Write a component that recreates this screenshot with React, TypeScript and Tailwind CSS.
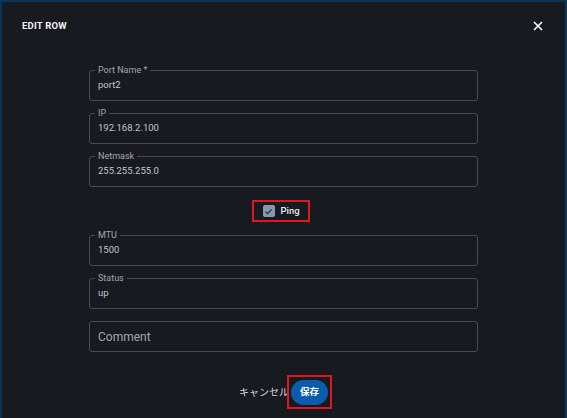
import React from 'react';

const fields = [
  { label: 'Port Name *', value: 'port2' },
  { label: 'IP', value: '192.168.2.100' },
  { label: 'Netmask', value: '255.255.255.0' },
];

const fields2 = [
  { label: 'MTU', value: '1500' },
  { label: 'Status', value: 'up' },
];

function Field({ label, value }: { label: string; value: string }) {
  return (
    <div className="relative h-[31px] w-full rounded-[3px] border border-[#464a52] flex items-center px-[8px]">
      <span className="absolute left-[5px] -top-[6px] bg-[#171a21] px-[3px] text-[9px] leading-[10px] text-[#a3a6ad]">
        {label}
      </span>
      <span className="text-[9.5px] text-[#c4c6cb]">{value}</span>
    </div>
  );
}

export default function App() {
  return (
    <div className="w-[567px] h-[418px] bg-[#0e3455] pt-[2px] px-[2px] overflow-hidden" style={{ fontFamily: 'Roboto, "Noto Sans CJK JP", sans-serif' }}>
      <div className="h-full bg-[#171a21] flex flex-col">
        <div className="flex items-center justify-between h-[46px] pl-[20px] pr-[22px] pt-[2px]">
          <h2 className="text-[9.5px] font-bold text-[#f2f2f2] tracking-[0.2px]">EDIT ROW</h2>
          <svg width="10" height="10" viewBox="0 0 10 10" className="text-white">
            <path d="M1 1L9 9M9 1L1 9" stroke="currentColor" strokeWidth="1.6" />
          </svg>
        </div>
        <div className="flex flex-col items-center px-[87px] pt-[22px]">
          <div className="flex flex-col gap-[12px] w-full">
            {fields.map((f) => (
              <Field key={f.label} {...f} />
            ))}
          </div>
          <div className="mt-[13px] mr-[6px] border-2 border-[#e3161b] h-[22px] w-[58px] flex items-center pl-[9px] gap-[6px]">
            <span className="w-[12px] h-[12px] rounded-[2px] bg-[#8999ad] flex items-center justify-center">
              <svg width="9" height="9" viewBox="0 0 10 10">
                <path d="M1.8 5.2L4 7.4L8.4 2.8" stroke="#2a3140" strokeWidth="1.4" fill="none" />
              </svg>
            </span>
            <span className="text-[9.5px] font-medium text-[#e8e9ec]">Ping</span>
          </div>
          <div className="flex flex-col gap-[12px] w-full mt-[13px]">
            {fields2.map((f) => (
              <Field key={f.label} {...f} />
            ))}
            <div className="h-[31px] w-full rounded-[3px] border border-[#464a52] flex items-center px-[8px]">
              <span className="text-[12px] text-[#a3a6ad]">Comment</span>
            </div>
          </div>
          <div className="flex items-center mt-[23px] ml-[4px]">
            <span className="text-[10px] text-[#d6d8dc]">キャンセル</span>
            <div className="border-2 border-[#e3161b] w-[45px] h-[34px] flex items-center justify-center ml-[-2px]">
              <div className="bg-[#0b5cab] rounded-full w-[37px] h-[25px] flex items-center justify-center">
                <span className="text-[9.5px] font-bold text-white">保存</span>
              </div>
            </div>
          </div>
        </div>
      </div>
    </div>
  );
}
